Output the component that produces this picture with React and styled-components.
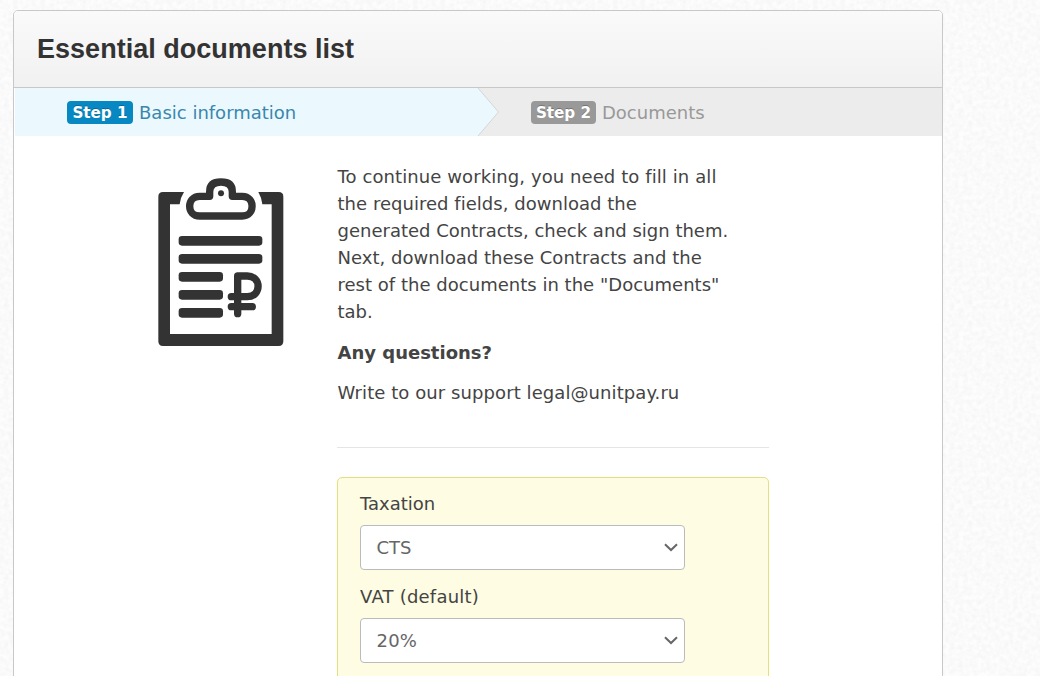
import React from "react";
import styled, { createGlobalStyle } from "styled-components";

const grain = encodeURIComponent(
  `<svg xmlns="http://www.w3.org/2000/svg" width="200" height="200"><filter id="n" x="0" y="0" width="100%" height="100%"><feTurbulence type="fractalNoise" baseFrequency="0.22" numOctaves="3" seed="4" stitchTiles="stitch"/><feColorMatrix type="matrix" values="0 0 0 0 0  0 0 0 0 0  0 0 0 0 0  0.055 0 0 0 -0.016"/></filter><rect width="200" height="200" fill="#fdfdfd"/><rect width="200" height="200" filter="url(#n)"/></svg>`
);

const GlobalStyle = createGlobalStyle`
  *, *::before, *::after { box-sizing: border-box; }
  html, body { margin: 0; height: 676px; overflow: hidden; }
  body {
    background: #fbfbfb url("data:image/svg+xml,${grain}");
    color: #444;
    font: 18px/27px Verdana, "DejaVu Sans", sans-serif;
    font-variant-ligatures: none;
  }
`;

const Page = styled.main`
  height: 676px;
  padding: 10px 97px 0 13px;
  overflow: hidden;
`;

const Panel = styled.section`
  height: 700px;
  border: 1px solid #c8c8c8;
  border-radius: 5px;
  background: #fff;
  overflow: hidden;
`;

const PanelHeader = styled.header`
  display: flex;
  align-items: center;
  height: 77px;
  padding: 0 23px 1px;
  border-bottom: 1px solid #c8c8c8;
  background: linear-gradient(#fafafa, #f1f1f1);
`;

const Title = styled.h1`
  margin: 0;
  color: #333;
  font: bold 27px/36px "Liberation Sans", Arial, sans-serif;
  letter-spacing: 0.02px;
  white-space: nowrap;
`;

const Steps = styled.nav`
  display: flex;
  height: 48px;
  margin-left: 1px;
  background: #ececec;
`;

const Step = styled.div`
  display: flex;
  align-items: center;
  flex: ${(p) => (p.$active ? "0 0 463px" : "1")};
  padding-left: ${(p) => (p.$active ? "52px" : "32px")};
  background: ${(p) => (p.$active ? "#ebf9ff" : "transparent")};
  color: ${(p) => (p.$active ? "#3a87ad" : "#999")};
`;

const Arrow = styled.svg`
  display: block;
  flex: none;
`;

const Badge = styled.span`
  width: ${(p) => p.$width}px;
  height: 23px;
  margin-right: 6px;
  border-radius: 4px;
  background: ${(p) => (p.$active ? "#0788c3" : "#999")};
  color: #fff;
  font-size: 15.2px;
  font-weight: bold;
  line-height: 24px;
  text-align: center;
  text-shadow: 0 -1px 0 rgba(0, 0, 0, 0.25);
  white-space: nowrap;
`;

const Line = styled.span`
  display: ${(p) => (p.$block ? "block" : "inline")};
  letter-spacing: ${(p) => p.$tracking || 0}px;
  white-space: nowrap;
`;

const Body = styled.div`
  display: flex;
  padding: 27px 0 0 131px;
`;

const Clipboard = styled.svg`
  flex: none;
  width: 150px;
  height: 195px;
  margin: 2px 42px 0 0;
`;

const Content = styled.div`
  width: 432px;
`;

const Paragraph = styled.p`
  margin: 0 0 ${(p) => (p.$strong ? 13 : 14)}px;
  padding-left: 0.5px;
  font-weight: ${(p) => (p.$strong ? "bold" : "normal")};
`;

const Divider = styled.hr`
  height: 1px;
  margin: 41px 0 29px;
  border: 0;
  background: #e5e5e5;
`;

const FormBox = styled.form`
  height: 260px;
  padding: 12px 22px;
  border: 1px solid #e6df80;
  border-radius: 5px;
  background: #fefce2;
`;

const Field = styled.label`
  display: block;
  height: 93px;
`;

const Select = styled.span`
  display: flex;
  align-items: center;
  justify-content: space-between;
  width: 325px;
  height: 45px;
  margin-top: 8px;
  padding: 0 6px 0 15.5px;
  border: 1px solid #bbb;
  border-radius: 4px;
  background: #fff;
  color: #666;
`;

const ClipboardIcon = () => (
  <Clipboard viewBox="0 0 450 585" fill="none" stroke="#333" strokeLinecap="round" strokeLinejoin="round">
    <path
      d="M54 81H117Q107 96 104 118H75V507H380V118H352Q349 96 340 81H401Q415 81 415 95V529Q415 543 401 543H54Q40 543 40 529V95Q40 81 54 81Z"
      fill="#333"
      stroke="none"
    />
    <path d="M194 94V80Q194 51 228 51Q262 51 262 80V94H292C331 94 331 153 292 153H164C124 153 124 94 164 94Z" strokeWidth="22" />
    <circle cx="228" cy="85" r="9" fill="#333" stroke="none" />
    <g fill="#333" stroke="none">
      <rect x="101" y="213" width="251" height="29" rx="10" />
      <rect x="101" y="267" width="251" height="29" rx="10" />
      <rect x="101" y="321" width="133" height="29" rx="10" />
      <rect x="101" y="375" width="133" height="29" rx="10" />
      <rect x="101" y="429" width="133" height="29" rx="10" />
    </g>
    <path d="M278 446V333H307C350 333 350 395 307 395H259M259 425H322" strokeWidth="22" />
  </Clipboard>
);

const Chevron = () => (
  <svg width="14" height="10" viewBox="0 0 14 10" fill="none" stroke="#666" strokeWidth="2">
    <path d="M1 1.3L7 7L13 1.3" />
  </svg>
);

const intro = [
  ["To continue working, you need to fill in all", 0.09],
  ["the required fields, download the", 0.03],
  ["generated Contracts, check and sign them.", 0],
  ["Next, download these Contracts and the", 0.02],
  ['rest of the documents in the "Documents"', 0.02],
  ["tab.", 0],
];

const fields = [
  { label: "Taxation", value: "CTS", tracking: 0 },
  { label: "VAT (default)", value: "20%", tracking: 0.22 },
];

export default function App() {
  return (
    <Page>
      <GlobalStyle />
      <Panel>
        <PanelHeader>
          <Title>Essential documents list</Title>
        </PanelHeader>
        <Steps>
          <Step $active>
            <Badge $active $width={66}>Step 1</Badge>
            <Line>Basic information</Line>
          </Step>
          <Arrow width="21" height="48" viewBox="0 0 21 48">
            <path d="M0 0L20.5 24L0 48Z" fill="#ebf9ff" />
            <path d="M0 0L20.5 24L0 48" fill="none" stroke="#d2d6d8" />
          </Arrow>
          <Step>
            <Badge $width={65}>Step 2</Badge>
            <Line>Documents</Line>
          </Step>
        </Steps>
        <Body>
          <ClipboardIcon />
          <Content>
            <Paragraph>
              {intro.map(([text, tracking]) => (
                <Line key={text} $block $tracking={tracking}>{text}</Line>
              ))}
            </Paragraph>
            <Paragraph $strong>
              <Line>Any questions?</Line>
            </Paragraph>
            <Paragraph>
              <Line $tracking={0.08}>Write to our support legal@unitpay.ru</Line>
            </Paragraph>
            <Divider />
            <FormBox>
              {fields.map(({ label, value, tracking }) => (
                <Field key={label}>
                  <Line $tracking={tracking}>{label}</Line>
                  <Select>
                    <Line $tracking={tracking}>{value}</Line>
                    <Chevron />
                  </Select>
                </Field>
              ))}
            </FormBox>
          </Content>
        </Body>
      </Panel>
    </Page>
  );
}
